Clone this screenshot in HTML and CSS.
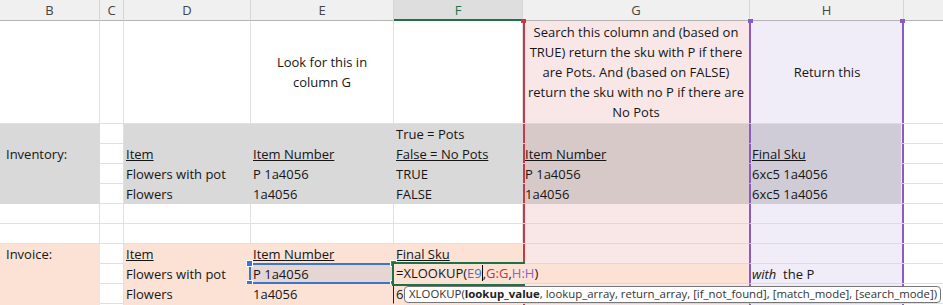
FILE: index.html
```html
<!DOCTYPE html>
<html lang="en">
<head>
    <meta charset="UTF-8">
    <title>Inventory lookup</title>
    <link rel="stylesheet" href="styles.css">
</head>
<body>

    <div class="sheet">
        <!-- column headers -->
        <div class="hd">B</div>
        <div class="hd">C</div>
        <div class="hd">D</div>
        <div class="hd">E</div>
        <div class="hd sel">F</div>
        <div class="hd">G</div>
        <div class="hd">H</div>
        <div class="hd"></div>

        <!-- row 1: notes -->
        <div class="c"></div>
        <div class="c"></div>
        <div class="c"></div>
        <div class="c tall"><span>Look for this in<br>column G</span></div>
        <div class="c"></div>
        <div class="c colg tall"><span>Search this column and (based on<br>TRUE) return the sku with P if there<br>are Pots. And (based on FALSE)<br>return the sku with no P if there are<br>No Pots</span></div>
        <div class="c colh tall"><span>Return this</span></div>
        <div class="c"></div>

        <!-- inventory -->
        <div class="c gray"></div>
        <div class="c"></div>
        <div class="c gray"></div>
        <div class="c gray"></div>
        <div class="c gray">True = Pots</div>
        <div class="c colg gray"></div>
        <div class="c colh gray"></div>
        <div class="c"></div>

        <div class="c gray first">Inventory:</div>
        <div class="c"></div>
        <div class="c gray"><u>Item</u></div>
        <div class="c gray"><u>Item Number</u></div>
        <div class="c gray"><u>False = No Pots</u></div>
        <div class="c colg gray"><u>Item Number</u></div>
        <div class="c colh gray"><u>Final Sku</u></div>
        <div class="c"></div>

        <div class="c gray"></div>
        <div class="c"></div>
        <div class="c gray">Flowers with pot</div>
        <div class="c gray">P 1a4056</div>
        <div class="c gray">TRUE</div>
        <div class="c colg gray">P 1a4056</div>
        <div class="c colh gray">6xc5 1a4056</div>
        <div class="c"></div>

        <div class="c gray"></div>
        <div class="c"></div>
        <div class="c gray">Flowers</div>
        <div class="c gray">1a4056</div>
        <div class="c gray">FALSE</div>
        <div class="c colg gray">1a4056</div>
        <div class="c colh gray">6xc5 1a4056</div>
        <div class="c"></div>

        <!-- blank rows -->
        <div class="c"></div>
        <div class="c"></div>
        <div class="c"></div>
        <div class="c"></div>
        <div class="c"></div>
        <div class="c colg"></div>
        <div class="c colh"></div>
        <div class="c"></div>

        <div class="c"></div>
        <div class="c"></div>
        <div class="c"></div>
        <div class="c"></div>
        <div class="c"></div>
        <div class="c colg"></div>
        <div class="c colh"></div>
        <div class="c"></div>

        <!-- invoice -->
        <div class="c peach first top">Invoice:</div>
        <div class="c"></div>
        <div class="c peach"><u>Item</u></div>
        <div class="c peach"><u>Item Number</u></div>
        <div class="c peach"><u>Final Sku</u></div>
        <div class="c colg"></div>
        <div class="c colh"></div>
        <div class="c"></div>

        <div class="c peach"></div>
        <div class="c"></div>
        <div class="c peach">Flowers with pot</div>
        <div class="c peach ref">P 1a4056
            <div class="refbox">
                <i class="dot tl"></i><i class="dot bl"></i><i class="dot tr"></i><i class="dot br"></i>
            </div>
        </div>
        <div class="c peach active">
            <div class="edit">=XLOOKUP(<span class="r1">E9</span><i class="caret"></i>,<span class="r2">G:G</span>,<span class="r3">H:H</span>)</div>
            <div class="cursor-box"></div>
        </div>
        <div class="c colg"></div>
        <div class="c colh"><em>with</em>&nbsp; the P</div>
        <div class="c"></div>

        <div class="c peach"></div>
        <div class="c"></div>
        <div class="c peach">Flowers</div>
        <div class="c peach mark">1a4056</div>
        <div class="c peach">6
            <div class="tip">XLOOKUP(<b>lookup_value</b>, lookup_array, return_array, [if_not_found], [match_mode], [search_mode])</div>
        </div>
        <div class="c colg"></div>
        <div class="c colh"></div>
        <div class="c"></div>

        <div class="c peach"></div>
        <div class="c"></div>
        <div class="c peach"></div>
        <div class="c peach"></div>
        <div class="c peach"></div>
        <div class="c colg"></div>
        <div class="c colh"></div>
        <div class="c"></div>

        <!-- range handles on G:G and H:H -->
        <i class="hnd red" style="left: 521px;"></i>
        <i class="hnd purple" style="left: 748px;"></i>
        <i class="hnd purple" style="left: 900px;"></i>
    </div>

</body>
</html>
```

FILE: styles.css
```css
body {
    margin: 0;
    background-color: #fff;
    font-family: "Open Sans", "Liberation Sans", Arial, sans-serif;
    font-size: 13px;
    color: #161616;
    overflow: hidden;
}
.sheet {
    position: relative;
    display: grid;
    grid-template-columns: 100px 24px 127px 143px 129px 227px 154px 40px;
    grid-template-rows: 21px 103px repeat(9, 20px) 2px;
}
.hd {
    display: flex;
    align-items: center;
    justify-content: center;
    background-color: #f0f0f0;
    border-right: 1px solid #d6d6d6;
    border-bottom: 1px solid #b4b4b4;
    font-size: 13px;
    color: #444;
}
.hd.sel {
    background-color: #dedede;
    color: #1e7145;
    border-bottom: 2px solid #1e7145;
}
.c {
    position: relative;
    display: flex;
    align-items: flex-end;
    padding: 0 2px;
    line-height: 18px;
    white-space: nowrap;
    border-right: 1px solid #e0e0e0;
    border-bottom: 1px solid #e0e0e0;
}
.c.first {
    padding-left: 6px;
}
.c.top {
    align-items: flex-start;
    padding-top: 1px;
}
.tall {
    align-items: center;
    justify-content: center;
    text-align: center;
    line-height: 20px;
}
.gray {
    background-color: #d9d9d9;
    border-color: #d9d9d9;
}
.peach {
    background-color: #fbe2d5;
    border-color: #fbe2d5;
}
.colg {
    background-color: #f9e7e7;
    border-bottom-color: #e6d5d5;
    border-right: 1px solid #8a5bc5;
    box-shadow: inset 2px 0 0 #c23b46;
}
.colg.gray {
    background-color: #d8c9c9;
    border-bottom-color: #d8c9c9;
}
.colh {
    background-color: #f0ecf8;
    border-bottom-color: #ddd9e6;
    border-right: 0;
    box-shadow: inset 1px 0 0 #8a5bc5, inset -2px 0 0 #8a5bc5;
}
.colh.gray {
    background: linear-gradient(#cfccd7, #cfccd7) 0 0 / 151px 100% no-repeat, #f0ecf8;
    border-bottom-color: #cfccd7;
}
.c.ref {
    background-color: #e6d6d3;
}
.refbox {
    position: absolute;
    left: -2px;
    top: -1px;
    right: -1px;
    bottom: -1px;
    border: 2px solid #3d75c9;
}
.dot {
    position: absolute;
    width: 5px;
    height: 5px;
    background-color: #3d75c9;
    border: 1px solid #fff;
}
.dot.tl { left: -5px; top: -5px; }
.dot.bl { left: -5px; bottom: -5px; }
.dot.tr { right: -5px; top: -5px; }
.dot.br { right: -5px; bottom: -5px; }
.edit {
    position: absolute;
    left: 0;
    top: 0;
    width: 352px;
    height: 19px;
    padding-left: 2px;
    line-height: 18px;
    background-color: #fbe2d5;
    z-index: 2;
}
.r1 { color: #3d75c9; }
.r2 { color: #c8323c; }
.r3 { color: #8d63c9; }
.caret {
    display: inline-block;
    width: 1px;
    height: 16px;
    vertical-align: -3px;
    background-color: #000;
}
.cursor-box {
    position: absolute;
    left: -2px;
    top: -2px;
    width: 131px;
    height: 20px;
    border: 2px solid #1e7145;
    border-right: 0;
    z-index: 3;
}
.c.mark {
    border-right-color: #222;
}
.tip {
    position: absolute;
    left: 10px;
    top: 2px;
    width: 531px;
    height: 15px;
    padding-left: 4px;
    line-height: 14px;
    font-size: 11.4px;
    color: #333;
    background-color: #fff;
    border: 1px solid #767676;
    border-radius: 4px;
    z-index: 4;
}
.tip b {
    color: #222;
}
.hnd {
    position: absolute;
    top: 19px;
    width: 5px;
    height: 4px;
    z-index: 5;
}
.hnd.red { background-color: #c23b46; }
.hnd.purple { background-color: #8a5bc5; }
```
